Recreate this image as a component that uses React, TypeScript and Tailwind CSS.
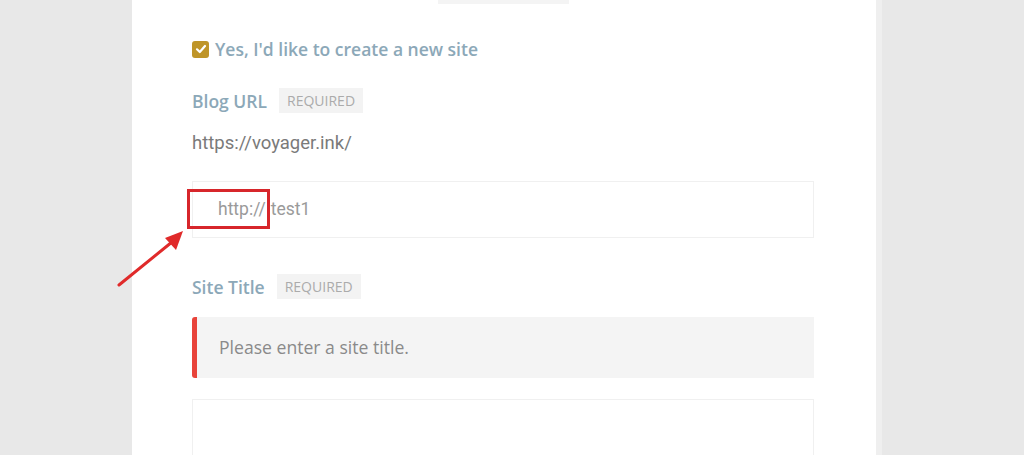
import React from "react";

export default function App() {
  return (
    <div className="relative flex h-[455px] w-[1024px] overflow-hidden bg-[#e8e8e8]">
      <div className="ml-[132px] h-full w-[750px] border-r-[6px] border-[#efefef] bg-white">
        <div className="ml-[306px] h-[4px] w-[131px] bg-[#f4f4f4]" />
        <div className="pl-[60px]">
          {/* checkbox row */}
          <div className="mt-[33px] flex items-center gap-[6px]">
            <div className="flex h-[17px] w-[17px] items-center justify-center rounded-[3px] bg-[#bf9528]">
              <svg width="12" height="12" viewBox="0 0 12 12" fill="none">
                <path d="M2 6.3 L4.8 9 L10 3" stroke="white" strokeWidth="2.2" strokeLinecap="round" strokeLinejoin="round" />
              </svg>
            </div>
            <span className="font-['Open_Sans'] text-[17.5px] font-semibold leading-[24px] text-[#8ca8b8]">
              Yes, I'd like to create a new site
            </span>
          </div>

          {/* Blog URL label */}
          <div className="mt-[27px] flex items-center gap-[12px]">
            <span className="font-['Open_Sans'] text-[17.5px] font-semibold leading-[24px] text-[#8ca8b8]">Blog URL</span>
            <span className="flex h-[25px] items-center bg-[#f3f3f3] px-[8px] font-['Open_Sans'] text-[14px] uppercase text-[#ababab]">
              Required
            </span>
          </div>

          <div className="mt-[18px] font-['Roboto'] text-[18.5px] leading-[24px] text-[#7a7a7a]">https://voyager.ink/</div>

          {/* input */}
          <div className="mt-[26px] flex h-[57px] w-[622px] items-center border border-[#f0f0f0] pl-[25px] font-['Roboto'] text-[17.5px]">
            <span className="text-[#9a9a9a]">http://</span>
            <span className="ml-[5px] text-[#9a9a9a]">test1</span>
          </div>

          {/* Site Title */}
          <div className="mt-[36px] flex items-center gap-[12px]">
            <span className="font-['Open_Sans'] text-[17.5px] font-semibold leading-[24px] text-[#8ca8b8]">Site Title</span>
            <span className="flex h-[25px] items-center bg-[#f3f3f3] px-[8px] font-['Open_Sans'] text-[14px] uppercase text-[#ababab]">
              Required
            </span>
          </div>

          {/* Error */}
          <div className="mt-[18px] flex h-[61px] w-[622px] items-center rounded-l-[3px] border-l-[5px] border-[#e8433a] bg-[#f4f4f4] pl-[22px] font-['Open_Sans'] text-[17.6px] text-[#8a8a8a]">
            Please enter a site title.
          </div>

          <div className="mt-[21px] h-[80px] w-[622px] border border-[#f0f0f0]" />
        </div>
      </div>

      {/* red highlight box */}
      <div className="absolute left-[187px] top-[189px] h-[40px] w-[83px] border-[3px] border-[#d7262b]" />

      {/* arrow */}
      <svg className="absolute left-0 top-0" width="1024" height="455" viewBox="0 0 1024 455" fill="none">
        <line x1="119" y1="285" x2="172" y2="242" stroke="#e02a2a" strokeWidth="3" strokeLinecap="round" />
        <polygon points="183,231 165,238 176,250" fill="#e02a2a" />
      </svg>
    </div>
  );
}
